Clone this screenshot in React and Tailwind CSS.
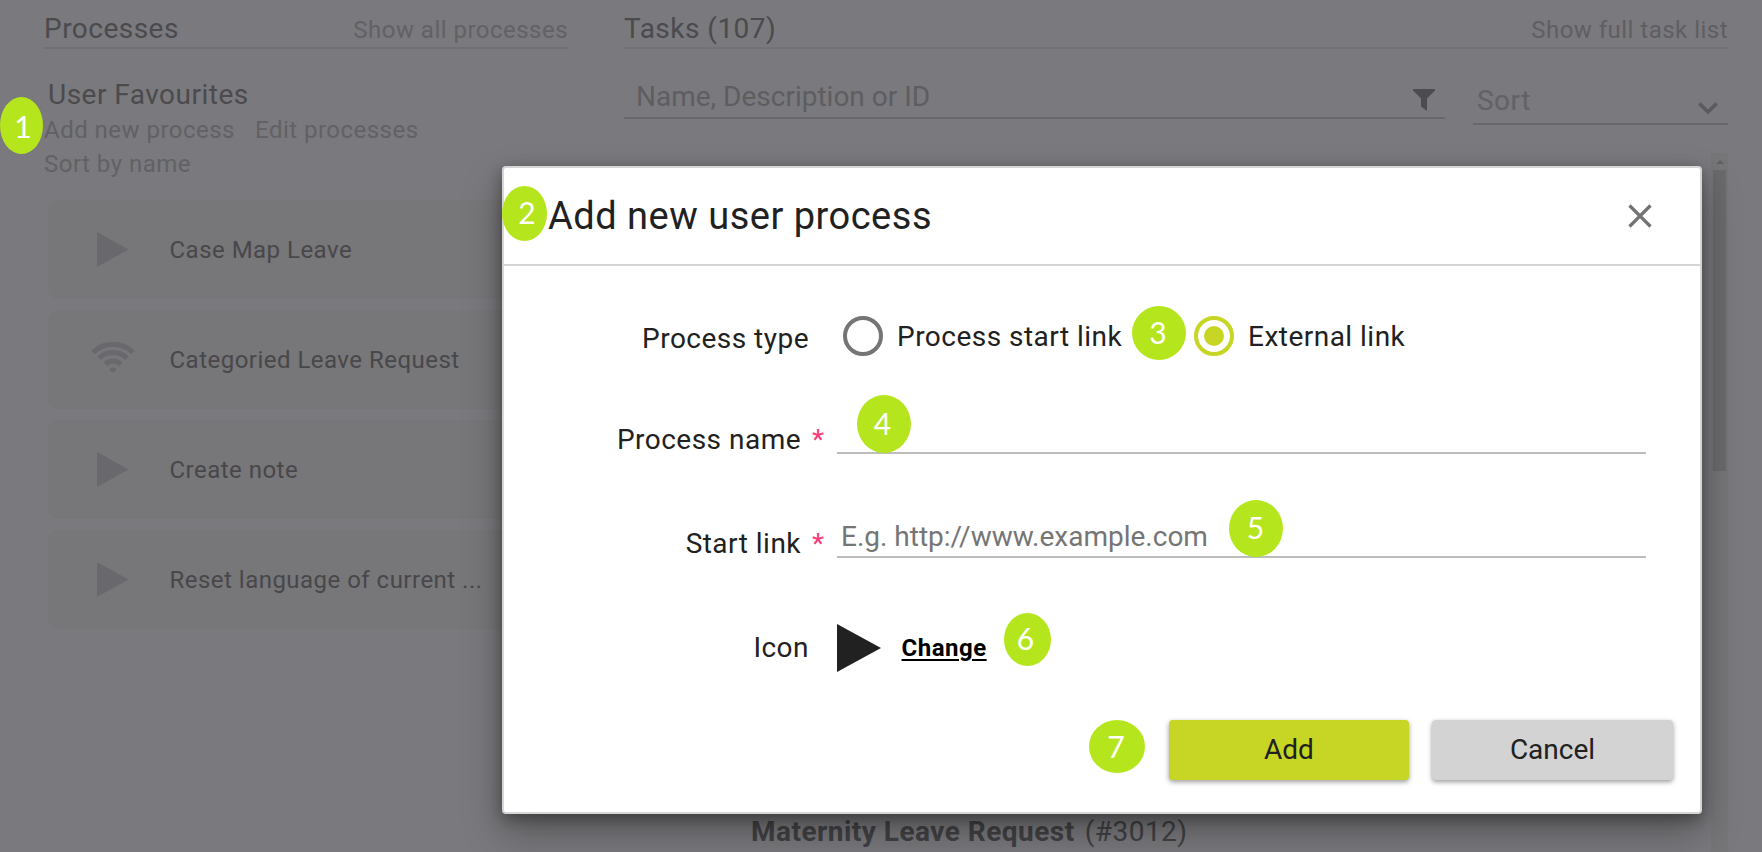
import React from "react";

const favourites = [
  { name: "Case Map Leave", icon: "play" },
  { name: "Categoried Leave Request", icon: "wifi" },
  { name: "Create note", icon: "play" },
  { name: "Reset language of current ...", icon: "play" },
];

function PlayIcon({ className }) {
  return (
    <svg viewBox="0 0 44 48" preserveAspectRatio="none" className={className} fill="currentColor">
      <path d="M0 0 L44 24 L0 48 Z" />
    </svg>
  );
}

function WifiIcon() {
  return (
    <svg viewBox="0 0 44 32" className="h-8 w-11" fill="none" stroke="currentColor" strokeWidth="5">
      <path d="M1.9 10.6 A28.4 28.4 0 0 1 42.1 10.6" />
      <path d="M8.1 16.3 A19.7 19.7 0 0 1 35.9 16.3" />
      <path d="M14.2 22.2 A11 11 0 0 1 29.8 22.2" />
      <path d="M18 27.4 Q22 23.4 26 27.4 L22 31 Z" fill="currentColor" stroke="none" />
    </svg>
  );
}

function Processes() {
  return (
    <section className="w-[524px] shrink-0 text-[24px] leading-[34px] text-[#626165]">
      <header className="flex h-[49px] items-baseline justify-between border-b-2 border-[#717074] pt-[9px]">
        <h2 className="text-[28px] leading-[40px] text-[#4b4a4d]">Processes</h2>
        <a>Show all processes</a>
      </header>
      <h3 className="mt-[26px] h-[38px] pl-1 text-[28px] leading-[40px] text-[#4b4a4d]">User Favourites</h3>
      <div className="flex gap-5">
        <a>Add new process</a>
        <a>Edit processes</a>
      </div>
      <a className="block">Sort by name</a>
      <ul className="mt-[19px] flex flex-col gap-[11px] pl-1">
        {favourites.map((f) => (
          <li key={f.name} className="flex h-[99px] items-center rounded-[10px] bg-[#777679]">
            <span className="flex w-[121.5px] shrink-0 items-center pb-px text-[#69686c]">
              {f.icon === "play" ? (
                <PlayIcon className="ml-[49px] h-[35px] w-[31.5px]" />
              ) : (
                <span className="ml-[43px] pb-[3px]">
                  <WifiIcon />
                </span>
              )}
            </span>
            <span className="text-[#48474a]">{f.name}</span>
          </li>
        ))}
      </ul>
    </section>
  );
}

function Tasks() {
  return (
    <section className="flex w-[1104px] shrink-0 flex-col">
      <header className="flex h-[49px] items-baseline justify-between border-b-2 border-[#737276] pt-[9px]">
        <h2 className="text-[28px] leading-[40px] text-[#4b4a4d]">Tasks (107)</h2>
        <a className="text-[24px] text-[#5f5e62]">Show full task list</a>
      </header>
      <div className="flex items-start justify-between">
        <div className="flex h-[70px] w-[821px] items-start justify-between border-b-2 border-[#68676b] pr-[10px] pl-3">
          <span className="mt-7 text-[28px] leading-[40px] tracking-normal text-[#5e5d61]">
            Name, Description or ID
          </span>
          <svg viewBox="0 0 22 22" className="mt-10 h-[22px] w-[22px]" fill="#4c4b4f">
            <path d="M0 0 H22 V1.4 L14 9.5 V22 L8 17.5 V9.5 L0 1.4 Z" />
          </svg>
        </div>
        <div className="flex h-[76px] w-[255px] items-start justify-between border-b-2 border-[#68676b] pr-[10px] pl-1">
          <span className="mt-8 text-[28px] leading-[40px] text-[#626165]">Sort</span>
          <svg viewBox="0 0 20 13" className="mt-[53px] h-[13px] w-5" fill="none" stroke="#5b5a5e" strokeWidth="3.6">
            <path d="M1.4 1.4 L10 10 L18.6 1.4" />
          </svg>
        </div>
      </div>
      <div className="mt-7 flex min-h-0 flex-1 justify-between">
        <p className="mt-[659px] ml-[127px] text-[28px] leading-[40px] whitespace-nowrap text-[#424144]">
          <b className="font-bold">Maternity Leave Request</b>
          <span className="ml-[10px]">(#3012)</span>
        </p>
        <div className="flex w-[17px] flex-col items-center bg-[#767578]">
          <svg viewBox="0 0 8 4" className="mt-[7px] h-1 w-2" fill="#605f63">
            <path d="M4 0 L8 4 H0 Z" />
          </svg>
          <div className="mt-[6px] h-[301px] w-[13px] bg-[#6a696c]" />
        </div>
      </div>
    </section>
  );
}

function Label({ children, required }) {
  return (
    <div className="flex w-[321px] shrink-0 justify-end">
      <span>{children}</span>
      {required ? <span className="ml-[11px] w-[13px] text-[#fb3b7a]">*</span> : <span className="w-4" />}
    </div>
  );
}

function Radio({ checked }) {
  return checked ? (
    <span className="flex size-10 items-center justify-center rounded-full border-4 border-[#c7d524]">
      <span className="size-5 rounded-full bg-[#c7d524]" />
    </span>
  ) : (
    <span className="size-10 rounded-full border-4 border-[#757575]" />
  );
}

function Dialog() {
  return (
    <div className="absolute top-[166px] left-[502px] flex h-[648px] w-[1200px] flex-col rounded-[4px] border-2 border-[#d6d6d6] bg-white text-[28px] leading-[40px] text-[#212121] shadow-[0_20px_40px_rgba(0,0,0,0.28),0_5px_16px_rgba(0,0,0,0.35)]">
      <header className="flex h-[98px] shrink-0 items-center justify-between border-b-2 border-[#d6d6d6] pr-12 pl-11">
        <h1 className="text-[38px] leading-[48px] tracking-[0.5px]">Add new user process</h1>
        <svg viewBox="0 0 24 24" className="size-6" fill="none" stroke="#737373" strokeWidth="3.2">
          <path d="M1.5 1.5 L22.5 22.5 M22.5 1.5 L1.5 22.5" />
        </svg>
      </header>
      <div className="mt-[41px] flex h-[52px] shrink-0 items-end">
        <Label>Process type</Label>
        <div className="ml-[18px] flex items-start pb-[3px]">
          <Radio />
          <span className="ml-[14px] w-[297px] pt-px leading-[39px]">Process start link</span>
          <Radio checked />
          <span className="ml-[14px] pt-px leading-[39px]">External link</span>
        </div>
      </div>
      <div className="mt-[61px] flex h-[42px] shrink-0">
        <Label required>Process name</Label>
        <div className="ml-3 h-[34px] w-[809px] border-b-2 border-[#bdbdbd]" />
      </div>
      <div className="mt-[62px] flex h-[42px] shrink-0">
        <Label required>Start link</Label>
        <div className="ml-3 flex h-[34px] w-[809px] items-end border-b-2 border-[#bdbdbd] pl-[4px]">
          <span className="-mb-px tracking-normal text-[#757575]">E.g. http://www.example.com</span>
        </div>
      </div>
      <div className="mt-[52px] flex h-[60px] shrink-0 items-center">
        <Label>Icon</Label>
        <PlayIcon className="ml-3 h-12 w-11" />
        <a className="ml-[20.5px] text-[24px] font-bold tracking-[0.5px] text-black underline decoration-2 underline-offset-[3px]">
          Change
        </a>
      </div>
      <div className="mt-[42px] flex justify-end gap-[23px] pr-[27px] tracking-normal">
        <button className="h-[60px] w-[240px] rounded-[4px] bg-[#c7d524] shadow-[0_2px_5px_rgba(0,0,0,0.4)]">Add</button>
        <button className="h-[60px] w-[241px] rounded-[4px] bg-[#d3d3d3] shadow-[0_2px_5px_rgba(0,0,0,0.4)]">
          Cancel
        </button>
      </div>
    </div>
  );
}

function Badge({ className, children }) {
  return (
    <span
      className={
        "absolute flex items-center justify-center rounded-[50%] bg-[#b5e61d] font-['Lato',sans-serif] text-[30px] leading-none tracking-normal text-white " +
        className
      }
    >
      {children}
    </span>
  );
}

export default function App() {
  return (
    <div className="relative h-[852px] w-[1762px] overflow-hidden bg-[#7a797d] font-['Roboto',sans-serif] tracking-[0.48px]">
      <main className="flex h-full gap-14 pl-11">
        <Processes />
        <Tasks />
      </main>
      <Dialog />
      <Badge className="top-[97px] left-0 h-[57px] w-[43px] pl-[3px]">1</Badge>
      <Badge className="top-[186px] left-[502px] h-[55px] w-[45px] pb-[4px] pl-[5px]">2</Badge>
      <Badge className="top-[306px] left-[1132px] h-[54px] w-[54px] pr-[2px] pb-[2px]">3</Badge>
      <Badge className="top-[395px] left-[857px] h-[58px] w-[54px] pr-[3px] pb-[3px]">4</Badge>
      <Badge className="top-[500px] left-[1229px] h-[57px] w-[54px] pr-px pb-[4px]">5</Badge>
      <Badge className="top-[613px] left-[1004px] h-[53px] w-[47px] pr-[4px] pb-[4px]">6</Badge>
      <Badge className="top-[720px] left-[1089px] h-[53px] w-[56px] pr-[2px] pb-px">7</Badge>
    </div>
  );
}
